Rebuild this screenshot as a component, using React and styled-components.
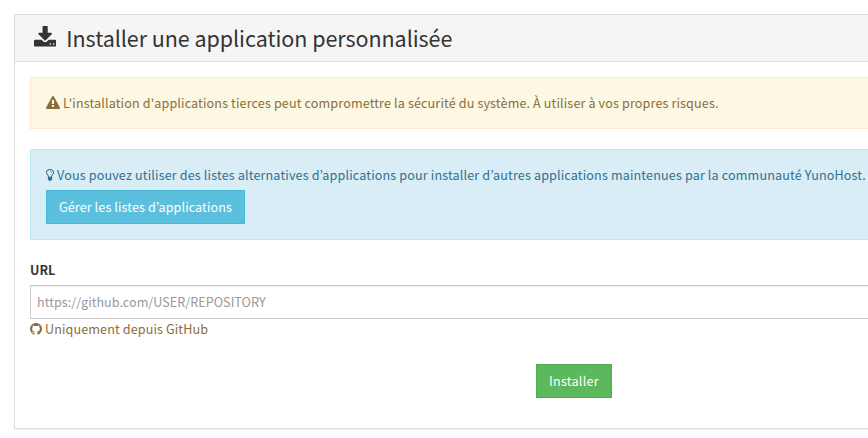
import styled, { createGlobalStyle } from "styled-components";

const GlobalStyle = createGlobalStyle`
    *, *::before, *::after {
        box-sizing: border-box;
    }

    body {
        margin: 0;
        background: #ffffff;
        color: #333333;
        font-family: 'Source Sans Pro', 'Noto Sans CJK JP', 'Noto Sans', sans-serif;
        font-size: 12.6px;
        line-height: 20px;
        overflow: hidden;
    }
`;

const Page = styled.main`
    width: 1148px;
    padding: 14px;
`;

const Panel = styled.section`
    height: 415px;
    background: #ffffff;
    border: 1px solid #dddddd;
    box-shadow: 0 1px 1px rgba(0, 0, 0, 0.05);
`;

const PanelHeading = styled.header`
    display: flex;
    align-items: center;
    gap: 10px;
    height: 47px;
    padding: 0 19px;
    background: #f5f5f5;
    border-bottom: 1px solid #dddddd;
`;

const PanelTitle = styled.h2`
    margin: 0;
    font-size: 21.5px;
    font-weight: 400;
    line-height: 26px;
    letter-spacing: -0.05px;
    white-space: nowrap;
`;

const PanelBody = styled.div`
    padding: 15px;
`;

const tones = {
    warning: { color: "#8a6d3b", background: "#fcf8e3", border: "#faebcc" },
    info: { color: "#31708f", background: "#d9edf7", border: "#bce8f1" },
};

const Alert = styled.div`
    display: flex;
    flex-direction: column;
    align-items: flex-start;
    gap: 5px;
    margin-bottom: 20px;
    padding: 15px;
    color: ${({ $tone }) => tones[$tone].color};
    background: ${({ $tone }) => tones[$tone].background};
    border: 1px solid ${({ $tone }) => tones[$tone].border};
`;

const IconText = styled.p`
    display: flex;
    align-items: center;
    gap: 3px;
    margin: 0;
    white-space: nowrap;
    letter-spacing: ${({ $spacing }) => $spacing || "normal"};
`;

const HelpText = styled(IconText)`
    color: #8a6d3b;
`;

const Icon = styled.svg`
    flex: none;
    height: ${({ $size }) => $size}px;
    fill: currentColor;
`;

const buttonColors = {
    info: { background: "#5bc0de", border: "#46b8da" },
    success: { background: "#5cb85c", border: "#4cae4c" },
};

const Button = styled.button`
    width: ${({ $width }) => $width}px;
    height: 34px;
    padding: 0;
    color: #ffffff;
    background: ${({ $tone }) => buttonColors[$tone].background};
    border: 1px solid ${({ $tone }) => buttonColors[$tone].border};
    font: inherit;
    letter-spacing: ${({ $spacing }) => $spacing || "normal"};
    white-space: nowrap;
    cursor: pointer;
`;

const Label = styled.label`
    display: block;
    margin-bottom: 5px;
    font-weight: 700;
`;

const Input = styled.input`
    display: block;
    width: 100%;
    height: 34px;
    padding: 5px 6px 7px;
    color: #555555;
    background: #ffffff;
    border: 1px solid #cccccc;
    box-shadow: inset 0 1px 1px rgba(0, 0, 0, 0.075);
    font: inherit;
    letter-spacing: 0.03px;

    &::placeholder {
        color: #999999;
        opacity: 1;
    }
`;

const Actions = styled.div`
    display: flex;
    justify-content: center;
    margin-top: 25px;
`;

const DownloadIcon = () => (
    <Icon $size={24} viewBox="0 0 1664 1792" aria-hidden="true">
        <path d="M1280 1344q0-26-19-45t-45-19-45 19-19 45 19 45 45 19 45-19 19-45zm256 0q0-26-19-45t-45-19-45 19-19 45 19 45 45 19 45-19 19-45zm128-224v320q0 40-28 68t-68 28h-1472q-40 0-68-28t-28-68v-320q0-40 28-68t68-28h465l135 136q58 56 136 56t136-56l136-136h464q40 0 68 28t28 68zm-325-569q17 41-14 70l-448 448q-18 19-45 19t-45-19l-448-448q-31-29-14-70 17-39 59-39h256v-448q0-26 19-45t45-19h256q26 0 45 19t19 45v448h256q42 0 59 39z" />
    </Icon>
);

const WarningIcon = () => (
    <Icon $size={14} viewBox="0 0 1792 1792" aria-hidden="true">
        <path d="M1024 1375v-190q0-14-9.5-23.5t-22.5-9.5h-192q-13 0-22.5 9.5t-9.5 23.5v190q0 14 9.5 23.5t22.5 9.5h192q13 0 22.5-9.5t9.5-23.5zm-2-374l18-459q0-12-10-19-13-11-24-11h-220q-11 0-24 11-10 7-10 21l17 457q0 10 10 16.5t24 6.5h185q14 0 23.5-6.5t10.5-16.5zm-14-934l768 1408q35 63-2 126-17 29-46.5 46t-63.5 17h-1536q-34 0-63.5-17t-46.5-46q-37-63-2-126l768-1408q17-31 47-49t65-18 65 18 47 49z" />
    </Icon>
);

const LightbulbIcon = () => (
    <Icon $size={14} viewBox="384 0 1024 1792" aria-hidden="true">
        <path d="M1120 576q0 13-9.5 22.5t-22.5 9.5-22.5-9.5-9.5-22.5q0-46-54-71t-106-25q-13 0-22.5-9.5t-9.5-22.5 9.5-22.5 22.5-9.5q50 0 99.5 16t87 54 37.5 90zm160 0q0-72-34.5-134t-90-101.5-123-62-136.5-22.5-136.5 22.5-123 62-90 101.5-34.5 134q0 101 68 180 10 11 30.5 33t30.5 33q128 153 141 298h228q13-145 141-298 10-11 30.5-33t30.5-33q68-79 68-180zm128 0q0 155-103 268-45 49-74.5 87t-59.5 95.5-34 107.5q47 28 47 82 0 37-25 64 25 27 25 64 0 52-45 81 13 23 13 47 0 46-31.5 71t-77.5 25q-20 44-60 70t-87 26-87-26-60-70q-46 0-77.5-25t-31.5-71q0-24 13-47-45-29-45-81 0-37 25-64-25-27-25-64 0-54 47-82-4-50-34-107.5t-59.5-95.5-74.5-87q-103-113-103-268 0-99 44.5-184.5t117-142 164-89 186.5-32.5 186.5 32.5 164 89 117 142 44.5 184.5z" />
    </Icon>
);

const GithubIcon = () => (
    <Icon $size={14} viewBox="128 0 1536 1792" aria-hidden="true">
        <path d="M896 128q209 0 385.5 103t279.5 279.5 103 385.5q0 251-146.5 451.5t-378.5 277.5q-27 5-40-7t-13-30q0-3 .5-76.5t.5-134.5q0-97-52-142 57-6 102.5-18t94-39 81-66.5 53-105 20.5-150.5q0-119-79-206 37-91-8-204-28-9-81 11t-92 44l-38 24q-93-26-192-26t-192 26q-16-11-42.5-27t-83.5-38.5-85-13.5q-45 113-8 204-79 87-79 206 0 85 20.5 150t52.5 105 80.5 67 94 39 102.5 18q-39 36-49 103-21 10-45 15t-57 5-65.5-21.5-55.5-62.5q-19-32-48.5-52t-49.5-24l-20-3q-21 0-29 4.5t-5 11.5 9 14 13 12l7 5q22 10 43.5 38t31.5 51l10 23q13 38 44 61.5t67 30 69.5 7 55.5-3.5l23-4q0 38 .5 88.5t.5 54.5q0 18-13 30t-40 7q-232-77-378.5-277.5t-146.5-451.5q0-209 103-385.5t279.5-279.5 385.5-103z" />
    </Icon>
);

export default function App() {
    return (
        <>
            <GlobalStyle />
            <Page>
                <Panel>
                    <PanelHeading>
                        <DownloadIcon />
                        <PanelTitle>Installer une application personnalisée</PanelTitle>
                    </PanelHeading>
                    <PanelBody>
                        <Alert $tone="warning">
                            <IconText $spacing="0.128px">
                                <WarningIcon />
                                <span>L'installation d'applications tierces peut compromettre la sécurité du système. À utiliser à vos propres risques.</span>
                            </IconText>
                        </Alert>
                        <Alert $tone="info">
                            <IconText $spacing="0.14px">
                                <LightbulbIcon />
                                <span>Vous pouvez utiliser des listes alternatives d’applications pour installer d’autres applications maintenues par la communauté YunoHost.</span>
                            </IconText>
                            <Button type="button" $tone="info" $width={199} $spacing="0.1px">Gérer les listes d’applications</Button>
                        </Alert>
                        <Label htmlFor="url">URL</Label>
                        <Input id="url" type="text" placeholder="https://github.com/USER/REPOSITORY" />
                        <HelpText $spacing="0.11px">
                            <GithubIcon />
                            <span>Uniquement depuis GitHub</span>
                        </HelpText>
                        <Actions>
                            <Button type="submit" $tone="success" $width={76} $spacing="0.25px">Installer</Button>
                        </Actions>
                    </PanelBody>
                </Panel>
            </Page>
        </>
    );
}
